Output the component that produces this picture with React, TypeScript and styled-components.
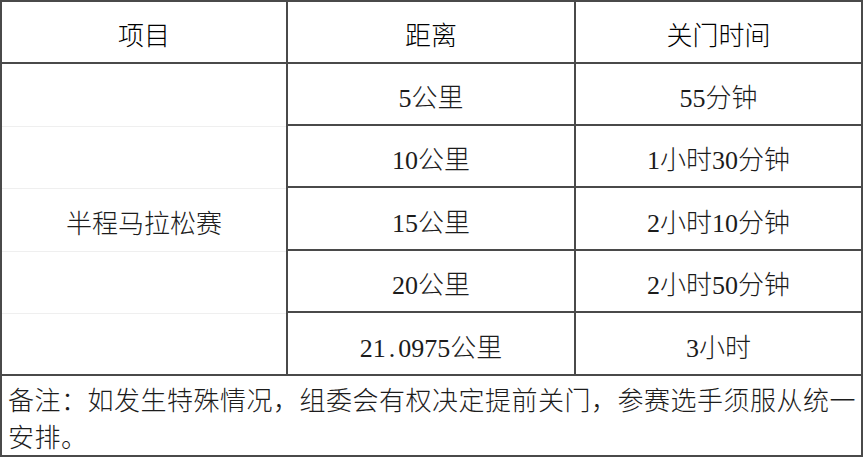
import React from "react";
import styled, { createGlobalStyle } from "styled-components";

const Global = createGlobalStyle`
  html, body { margin: 0; padding: 0; background: #ffffff; }
  body { font-family: "Liberation Serif", "Noto Sans CJK SC", serif; color: #1c1c1c; }
  * { box-sizing: border-box; }
`;

const LINE = "#4a4a4a";

const Table = styled.div`
  width: 863px;
  display: grid;
  grid-template-columns: 286px 288px 287px;
  grid-template-rows: 62px 62px 62px 63px 62px 63px 81px;
  border-left: 2px solid ${LINE};
  border-top: 2px solid ${LINE};
`;

const Cell = styled.div<{ $head?: boolean }>`
  display: flex;
  align-items: center;
  justify-content: center;
  border-right: 2px solid ${LINE};
  border-bottom: 2px solid ${LINE};
  font-size: 26px;
  line-height: 1;
  padding-top: ${(p) => (p.$head ? 9 : 10)}px;
  font-weight: 300;
  color: ${(p) => (p.$head ? "#000000" : "#1c1c1c")};
  white-space: nowrap;
`;

const Dot = styled.span`
  padding: 0 3px;
`;

const Merged = styled.div`
  grid-column: 1;
  grid-row: 2 / span 5;
  display: grid;
  grid-template-rows: 62px 62px 63px 62px 63px;
  border-right: 2px solid ${LINE};
  border-bottom: 2px solid ${LINE};
`;

const SubRow = styled.div`
  display: flex;
  align-items: center;
  justify-content: center;
  border-bottom: 1px solid #efefef;
  margin-bottom: -1px;
  font-size: 26px;
  font-weight: 300;
  line-height: 1;
  padding-top: 10px;
  &:last-child { border-bottom: none; margin-bottom: 0; }
`;

const Note = styled.div`
  grid-column: 1 / span 3;
  border-right: 2px solid ${LINE};
  border-bottom: 2px solid ${LINE};
  font-size: 26px;
  font-weight: 300;
  letter-spacing: 0.5px;
  line-height: 37px;
  padding: 7px 4px 0 6px;
`;

const rows: [React.ReactNode, string][] = [
  ["5公里", "55分钟"],
  ["10公里", "1小时30分钟"],
  ["15公里", "2小时10分钟"],
  ["20公里", "2小时50分钟"],
  [<>21<Dot>.</Dot>0975公里</>, "3小时"],
];

export default function App() {
  return (
    <>
      <Global />
      <Table>
        <Cell $head>项目</Cell>
        <Cell $head>距离</Cell>
        <Cell $head>关门时间</Cell>
        <Merged>
          <SubRow />
          <SubRow />
          <SubRow>半程马拉松赛</SubRow>
          <SubRow />
          <SubRow />
        </Merged>
        {rows.map(([d, t], i) => (
          <React.Fragment key={i}>
            <Cell style={{ gridColumn: 2, gridRow: i + 2 }}>{d}</Cell>
            <Cell style={{ gridColumn: 3, gridRow: i + 2 }}>{t}</Cell>
          </React.Fragment>
        ))}
        <Note>备注：如发生特殊情况，组委会有权决定提前关门，参赛选手须服从统一安排。</Note>
      </Table>
    </>
  );
}
